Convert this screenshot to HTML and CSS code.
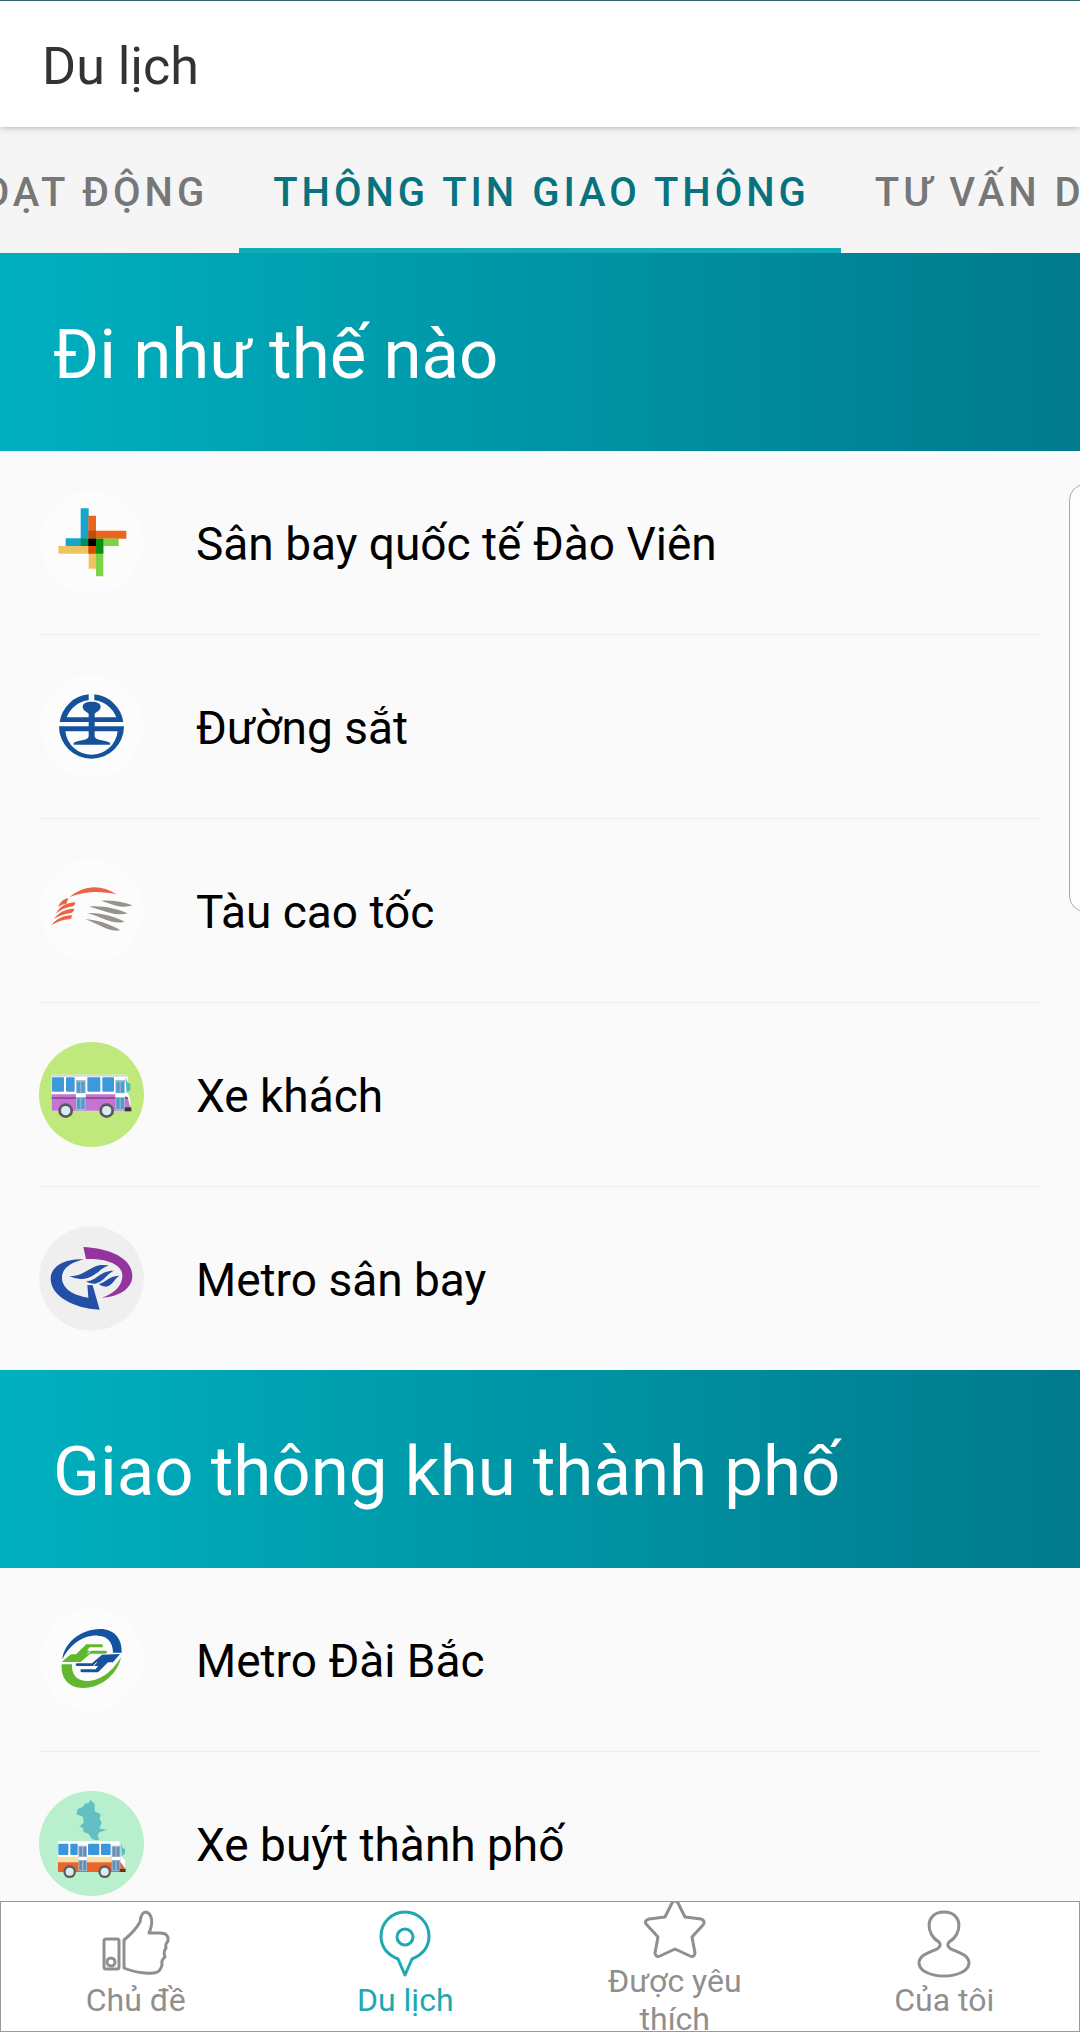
FILE: index.html
```
<!DOCTYPE html>
<html lang="vi">
<head>
    <meta charset="UTF-8">
    <meta name="viewport" content="width=device-width, initial-scale=1.0">
    <title>Du lịch</title>
    <link rel="stylesheet" href="styles.css">
</head>
<body>
    <header class="top-bar">
        <h1>Du lịch</h1>
    </header>

    <div class="tabs" role="tablist">
        <div class="tab-side left">
            <button class="tab" role="tab">HOẠT ĐỘNG</button>
        </div>
        <button class="tab active" role="tab" aria-selected="true">THÔNG TIN GIAO THÔNG</button>
        <div class="tab-side">
            <button class="tab" role="tab">TƯ VẤN DU LỊCH</button>
        </div>
    </div>

    <main class="content">
        <h2 class="section-title">Đi như thế nào</h2>
        <ul class="list">
            <li>
                <a href="#airport">
                    <!-- airport -->
                    <svg class="row-icon" viewBox="27 30 315 315">
                        <circle cx="185" cy="187" r="154" fill="#fcfcfc"/>
                        <path fill="#18a5cc" d="M152 85h24v113h-69v-23h45z"/>
                        <path fill="#ea651e" d="M175 107h23v45h91v24h-91v45h-23z"/>
                        <path fill="#f0c362" d="M85 198h90v23h-90zM176 221h22v45h-22z"/>
                        <path fill="#7bd444" d="M198 176h68v22h-46v91h-22z"/>
                        <path fill="#008e55" d="M152 176h24v22h-24z"/>
                        <path fill="#058e12" d="M198 176h22v45h-22z"/>
                        <path fill="#b9510c" d="M175 152h23v24h-23z"/>
                        <path fill="#d94d04" d="M175 198h23v23h-23z"/>
                        <path fill="#000" d="M175 176h23v22h-23z"/>
                    </svg>
                    <span>Sân bay quốc tế Đào Viên</span>
                </a>
            </li>
            <li>
                <a href="#railway">
                    <!-- railway -->
                    <svg class="row-icon" viewBox="27 42 315 315">
                        <circle cx="185" cy="199" r="154" fill="#fcfcfc"/>
                        <path fill="#15529b" fill-rule="evenodd" d="M89 186A97 97 0 0 1 176 103V121A79 79 0 0 0 110 172H176V161C170 155 158 151 158 140C158 129 171 125 185 125S212 129 212 140C212 151 200 155 194 161V172H259A79 79 0 0 0 193 121V103A97 97 0 0 1 280 186Z"/>
                        <path fill="#15529b" fill-rule="evenodd" d="M87 199H282A97 97 0 0 1 87 199ZM106 214A79 79 0 0 0 263 214H194V229C196 242 222 240 240 248V254H131V248C149 240 174 242 176 229V214Z"/>
                        <path fill="#15529b" d="M176 184h18v17h-18z"/>
                    </svg>
                    <span>Đường sắt</span>
                </a>
            </li>
            <li>
                <a href="#hsr">
                    <!-- high speed rail -->
                    <svg class="row-icon" viewBox="27 39 315 315">
                        <circle cx="185" cy="196" r="154" fill="#fcfcfc"/>
                        <g fill="#ea6545">
                            <path d="M119 156C160 121 211 116 260 148C215 138 168 137 119 156Z"/>
                            <path d="M84 187C90 172 99 162 115 160L109 176C98 177 90 181 84 187Z"/>
                            <path d="M78 206C90 184 108 173 136 172Q136 180 129 184C108 187 91 194 78 206Z"/>
                            <path d="M72 222C86 202 105 192 133 191Q132 200 126 203C104 206 88 211 72 222Z"/>
                            <path d="M65 240C79 222 98 212 126 211Q126 219 121 222C98 224 80 231 65 240Z"/>
                        </g>
                        <g fill="#96938c">
                            <path d="M214 167C246 165 280 171 307 181C278 192 251 180 214 167Z"/>
                            <path d="M178 185C213 181 257 190 293 205C258 215 224 197 178 185Z"/>
                            <path d="M172 204C208 203 251 213 284 230C250 240 219 218 172 204Z"/>
                            <path d="M166 223C198 223 242 238 271 256C237 263 209 238 166 223Z"/>
                        </g>
                    </svg>
                    <span>Tàu cao tốc</span>
                </a>
            </li>
            <li>
                <a href="#coach">
                    <!-- coach -->
                    <svg class="row-icon" viewBox="27 36 315 315">
                        <circle cx="184.500" cy="193.500" r="157.500" fill="#bfe97c"/>
                        <path fill="#fff" d="M65 134h229v55l7 20v33H65z"/>
                        <path fill="#d1dbe5" d="M65 134h229v6H65z"/>
                        <path fill="#c574d3" d="M65 193h216l13 12 6 25v12H65z"/>
                        <path fill="#874b95" d="M65 202h229v5H65z"/>
                        <g fill="#3e99dc">
                            <rect x="66" y="142" width="36" height="43" rx="3"/>
                            <rect x="108" y="142" width="26" height="43" rx="3"/>
                            <rect x="172" y="142" width="39" height="43" rx="3"/>
                            <rect x="217" y="142" width="35" height="43" rx="3"/>
                        </g>
                        <path fill="#a7bbd1" d="M138 150h29v91h-29zM256 150h29v91h-29z"/>
                        <path fill="#4a9fcd" d="M141 155h10v33h-10zM154 155h10v33h-10zM141 204h10v33h-10zM154 204h10v33h-10zM259 155h10v33h-10zM272 155h10v33h-10zM259 204h10v33h-10zM272 204h10v33h-10z"/>
                        <path fill="#fff" d="M138 190h29v11h-29zM256 190h29v11h-29z"/>
                        <path fill="#4bbec4" d="M286 142l7 15 8 5v18l-11 10z"/>
                        <path fill="#3a3340" d="M284 232h20v12h-20z"/>
                        <circle cx="107" cy="242" r="22" fill="#5c555f"/>
                        <circle cx="107" cy="242" r="14" fill="#d4edf5"/>
                        <circle cx="230" cy="242" r="22" fill="#5c555f"/>
                        <circle cx="230" cy="242" r="14" fill="#d4edf5"/>
                    </svg>
                    <span>Xe khách</span>
                </a>
            </li>
            <li>
                <a href="#airport-metro">
                    <!-- airport metro -->
                    <svg class="row-icon" viewBox="27 33 315 315">
                        <circle cx="184.500" cy="190.500" r="157" fill="#efefef"/>
                        <path fill="#93359c" d="M160 96C231 99 307 126 307 183C307 220 268 246 215 248C250 237 279 213 277 179C275 147 226 129 168 132Z"/>
                        <path fill="#244fa7" d="M162 133C104 129 61 155 62 192C63 242 128 280 209 284L188 211L172 210L175 248C132 242 95 222 96 186C97 160 122 143 162 133Z"/>
                        <path fill="#244fa7" d="M118 183C157 186 181 154 211 150L236 151C204 165 187 194 151 192Q132 191 118 183Z"/>
                        <path fill="#244fa7" d="M167 199C202 197 209 167 251 167C227 180 221 200 195 206Q179 207 167 199Z"/>
                        <path fill="#244fa7" d="M206 207C231 201 232 184 268 182C252 193 247 211 229 215Q215 215 206 207Z"/>
                    </svg>
                    <span>Metro sân bay</span>
                </a>
            </li>
        </ul>

        <h2 class="section-title">Giao thông khu thành phố</h2>
        <ul class="list">
            <li>
                <a href="#taipei-metro">
                    <!-- Taipei metro -->
                    <svg class="row-icon" viewBox="27 39 315 315">
                        <circle cx="185" cy="196" r="154" fill="#fcfcfc"/>
                        <path fill="#15529f" d="M97 196C101 151 148 105 211 105C252 105 277 134 275 176H249C249 145 232 126 205 125C158 122 119 154 97 196Z"/>
                        <path fill="#61b72d" d="M273 189C266 234 218 282 159 282C116 282 92 253 95 211H126C124 241 140 260 168 261C213 262 250 229 273 189Z"/>
                        <path fill="#61b72d" d="M101 199L123 181H138L169 151H214Q219 151 219 156T214 160H179L171 170H226Q231 170 231 174T226 179H181L152 204H96Z"/>
                        <path fill="#15529f" d="M270 180L249 205H234L204 235H158Q151 235 151 230T158 226H197L204 216H142Q137 216 137 212T142 208H186L216 182Z"/>
                        <path fill="none" stroke="#fff" stroke-width="3" d="M172 181L186 165H216M200 205L186 221H158"/>
                    </svg>
                    <span>Metro Đài Bắc</span>
                </a>
            </li>
            <li>
                <a href="#city-bus">
                    <!-- city bus -->
                    <svg class="row-icon" viewBox="27 33 315 315">
                        <circle cx="184.500" cy="190.500" r="157.500" fill="#b8efcc"/>
                        <path fill="#62bfc2" d="M181 60l13 12v22l18 9-3 15 6 10-7 17 22 5-22 7-6 11 7 10-10 3-13-4-10-15-15-6-2-12-10-5 12-11-2-18-20-7 4-16 15-6 8-10 10-2z"/>
                        <path fill="#fff" d="M84 184h185v42l16 14v34H84z"/>
                        <path fill="#f8dfa2" d="M84 230h185v17H84z"/>
                        <path fill="#e9642c" d="M84 247h188l13 18v11H84z"/>
                        <g fill="#3b95dc">
                            <rect x="85" y="191" width="30" height="34" rx="3"/>
                            <rect x="121" y="191" width="22" height="34" rx="3"/>
                            <rect x="174" y="191" width="34" height="34" rx="3"/>
                            <rect x="213" y="191" width="29" height="34" rx="3"/>
                        </g>
                        <path fill="#a6b5ca" d="M145 197h26v76h-26zM245 197h26v76h-26z"/>
                        <path fill="#5b90ba" d="M148 201h8v28h-8zM160 201h8v28h-8zM148 242h8v28h-8zM160 242h8v28h-8zM248 201h8v28h-8zM260 201h8v28h-8zM248 242h8v28h-8zM260 242h8v28h-8z"/>
                        <path fill="#fff" d="M145 231h26v9h-26zM245 231h26v9h-26z"/>
                        <path fill="#53bebf" d="M273 190l5 14 7 4v12l-9 8z"/>
                        <path fill="#493e3d" d="M269 267h18v9h-18z"/>
                        <circle cx="119" cy="275" r="19" fill="#5c5e5e"/>
                        <circle cx="119" cy="275" r="12" fill="#dcebef"/>
                        <circle cx="224" cy="275" r="19" fill="#5c5e5e"/>
                        <circle cx="224" cy="275" r="12" fill="#dcebef"/>
                    </svg>
                    <span>Xe buýt thành phố</span>
                </a>
            </li>
        </ul>
    </main>

    <nav class="bottom-nav">
        <a href="#topics">
            <svg class="nav-icon" viewBox="0 0 66 66">
                <rect x="1" y="28" width="15" height="30" rx="2"/>
                <circle cx="8" cy="51" r="4"/>
                <path d="M21 29Q32 20 37 11Q38 1 43 1C50 3 50 13 46 22H57Q66 22 65 30Q62 33 63 37Q60 41 62 46Q58 49 59 54C57 62 52 63 42 62Q30 61 21 57Z"/>
            </svg>
            <span>Chủ đề</span>
        </a>
        <a href="#travel" class="active">
            <svg class="nav-icon" viewBox="0 0 66 66">
                <circle cx="33" cy="26" r="8"/>
                <path d="M33 64L26 48Q9 41 9 25A24 24 0 0 1 57 25Q57 41 40 48Z"/>
            </svg>
            <span>Du lịch</span>
        </a>
        <a href="#favorites">
            <svg class="nav-icon" viewBox="0 0 66 66">
                <path d="M30 11Q33 7 36 11L43 25L59 27Q64 29 61 33L50 45L53 61Q52 66 48 64L33 57L18 64Q14 66 13 61L16 45L5 33Q1 29 7 27L23 25Z"/>
            </svg>
            <span>Được yêu thích</span>
        </a>
        <a href="#mine">
            <svg class="nav-icon" viewBox="0 0 66 66">
                <path d="M28 31C14 23 14 1 33 1S52 23 38 31Q35 35 40 38C50 42 58 45 58 52C58 60 46 65 33 65S8 60 8 52C8 45 16 42 26 38Q31 35 28 31Z"/>
            </svg>
            <span>Của tôi</span>
        </a>
    </nav>

    <!-- handle of the side panel, sits over the list -->
    <div class="edge-handle"></div>
</body>
</html>
```
FILE: styles.css
```
* {
    box-sizing: border-box;
}

body {
    font-family: Roboto, "Noto Sans", sans-serif;
    display: flex;
    flex-direction: column;
    height: 100vh;
    margin: 0;
    background-color: #fafafa;
    overflow: hidden;
}

a {
    color: inherit;
    text-decoration: none;
}

.top-bar {
    position: relative;
    z-index: 1;
    flex-shrink: 0;
    padding: 35px 42px 30px;
    border-top: 1px solid #35636d;
    background-color: #fff;
    box-shadow: 0 1px 6px rgba(0, 0, 0, 0.25);
}

.top-bar h1 {
    margin: 0;
    font-size: 52px;
    font-weight: 400;
    line-height: 61px;
    color: #333;
}

.tabs {
    display: grid;
    grid-template-columns: minmax(0, 1fr) auto minmax(0, 1fr);
    flex-shrink: 0;
    background-color: #f5f5f5;
}

.tab-side {
    display: flex;
    overflow: hidden;
}

.tab-side.left {
    justify-content: flex-end;
}

.tab {
    flex-shrink: 0;
    height: 126px;
    padding: 10px 31px 0 34px;
    border: none;
    border-bottom: 5px solid transparent;
    background: none;
    font-family: inherit;
    font-size: 40px;
    font-weight: 500;
    letter-spacing: 4px;
    white-space: nowrap;
    color: #777;
    cursor: pointer;
}

.tab.active {
    border-bottom-color: #13abb9;
    color: #06737f;
}

.content {
    flex: 1;
    min-height: 0;
    overflow-y: auto;
    scrollbar-width: none;
}

.section-title {
    margin: 0;
    padding: 62px 53px 56px;
    background: linear-gradient(90deg, #00b0bf, #007a8c);
    font-size: 69px;
    font-weight: 400;
    line-height: 80px;
    color: #fff;
}

.list {
    margin: 0;
    padding: 0 40px 0 39px;
    list-style: none;
}

.list li {
    border-bottom: 1px solid #ededed;
}

.list li:last-child {
    border-bottom: none;
}

.list a {
    display: flex;
    align-items: center;
    gap: 52px;
    height: 183px;
    font-size: 46px;
    color: #000;
}

.list span {
    padding-top: 2px;
}

.row-icon {
    width: 105px;
    height: 105px;
    flex-shrink: 0;
}

.bottom-nav {
    display: grid;
    grid-template-columns: repeat(4, 1fr);
    flex-shrink: 0;
    height: 131px;
    border: 1px solid #999;
    background-color: #fff;
    overflow: hidden;
}

.bottom-nav a {
    display: flex;
    flex-direction: column;
    align-items: center;
    justify-content: center;
    gap: 4px;
    min-height: 0;
    padding: 0 48px 3px;
    font-size: 32px;
    line-height: 38px;
    text-align: center;
    color: #8f8f8f;
}

.bottom-nav a.active {
    color: #1ea8b2;
}

.nav-icon {
    width: 66px;
    height: 66px;
    flex-shrink: 0;
    overflow: visible;
    fill: none;
    stroke: currentColor;
    stroke-width: 3;
    stroke-linejoin: round;
}

.edge-handle {
    position: fixed;
    top: 484px;
    right: -9px;
    width: 20px;
    height: 428px;
    border: 1px solid #aaa;
    border-radius: 16px 0 0 16px;
    background-color: #fdfdfd;
}
```
